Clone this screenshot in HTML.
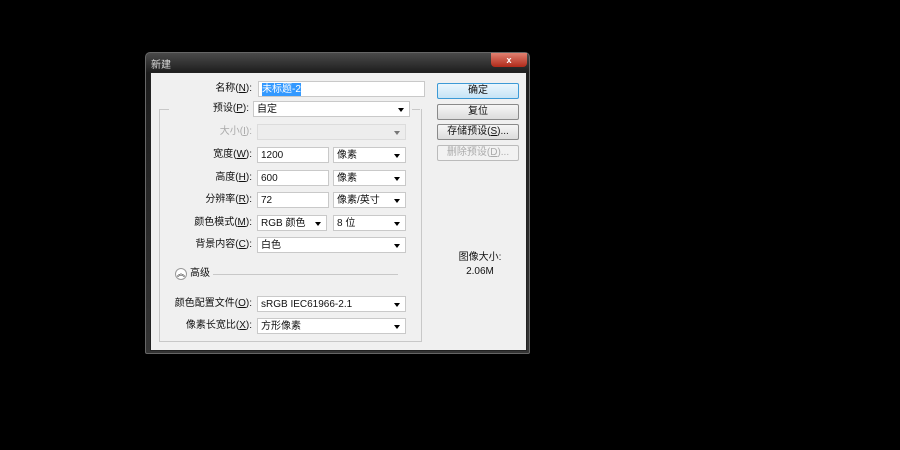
<!DOCTYPE html><html><head><meta charset="utf-8"><style>
body{margin:0;width:900px;height:450px;background:#000;position:relative;overflow:hidden;font-family:"Liberation Sans","Noto Sans CJK SC",sans-serif;font-size:10px;color:#111}
.a{position:absolute}
.win{left:145px;top:52px;width:385px;height:302px;background:linear-gradient(#4a4a4a,#1c1c1c 20px,#333);border-radius:5px 5px 2px 2px;border:1px solid #666;box-sizing:border-box}
.client{left:150px;top:72px;width:375px;height:277px;background:#f0f0f0;border:1px solid #222}
.inp{background:#fff;border:1px solid #c9c9c9;box-sizing:border-box;height:16px;line-height:13px;padding-left:3px;display:flex;align-items:center}
.dd::after{content:"";position:absolute;right:5px;top:6px;border-left:3px solid transparent;border-right:3px solid transparent;border-top:4px solid #000}
.lb{text-align:right;width:120px;line-height:16px;height:16px;left:132px}
.btn{left:437px;width:80px;height:14px;border:1px solid #8a8a8a;border-radius:2px;background:linear-gradient(#f6f6f6,#dcdcdc);text-align:center;line-height:14px;box-sizing:content-box}
u{text-decoration:underline}
</style></head><body>
<div class="a win"></div>
<div class="a" style="left:151px;top:56px;color:#ddd;font-size:10px">新建</div>
<div class="a" style="left:491px;top:53px;width:36px;height:14px;background:linear-gradient(#e08070,#b02a1a);border-radius:0 0 4px 4px;color:#fff;text-align:center;font-size:9px;line-height:14px;font-weight:bold">x</div>
<div class="a client"></div>
<div class="a" style="left:159px;top:109px;width:261px;height:232px;border:1px solid #c8c8c8;border-top:none"></div>
<div class="a" style="left:159px;top:109px;width:10px;border-top:1px solid #c8c8c8"></div>
<div class="a" style="left:412px;top:109px;width:8px;border-top:1px solid #c8c8c8"></div>
<div class="a lb" style="top:81px">名称(<u>N</u>):</div>
<div class="a inp" style="left:258px;top:81px;width:167px"><span style="background:#3399ff;color:#fff">未标题-2</span></div>
<div class="a lb" style="top:101px;left:129px">预设(<u>P</u>):</div>
<div class="a inp dd" style="left:253px;top:101px;width:157px">自定</div>
<div class="a lb" style="top:124px;color:#aaa">大小(<u>I</u>):</div>
<div class="a inp dd" style="left:257px;top:124px;width:149px;background:#ececec;opacity:.5"></div>
<div class="a lb" style="top:147px">宽度(<u>W</u>):</div>
<div class="a inp" style="left:257px;top:147px;width:72px">1200</div>
<div class="a inp dd" style="left:333px;top:147px;width:73px">像素</div>
<div class="a lb" style="top:170px">高度(<u>H</u>):</div>
<div class="a inp" style="left:257px;top:170px;width:72px">600</div>
<div class="a inp dd" style="left:333px;top:170px;width:73px">像素</div>
<div class="a lb" style="top:192px">分辨率(<u>R</u>):</div>
<div class="a inp" style="left:257px;top:192px;width:72px">72</div>
<div class="a inp dd" style="left:333px;top:192px;width:73px">像素/英寸</div>
<div class="a lb" style="top:215px">颜色模式(<u>M</u>):</div>
<div class="a inp dd" style="left:257px;top:215px;width:70px">RGB 颜色</div>
<div class="a inp dd" style="left:333px;top:215px;width:73px">8 位</div>
<div class="a lb" style="top:237px">背景内容(<u>C</u>):</div>
<div class="a inp dd" style="left:257px;top:237px;width:149px">白色</div>
<div class="a" style="left:175px;top:268px;width:10px;height:10px;border:1px solid #999;border-radius:50%;background:#fff;font-size:8px;text-align:center;line-height:10px">︽</div>
<div class="a" style="left:190px;top:266px;line-height:16px">高级</div>
<div class="a" style="left:213px;top:274px;width:185px;border-top:1px solid #c8c8c8"></div>
<div class="a lb" style="top:296px">颜色配置文件(<u>O</u>):</div>
<div class="a inp dd" style="left:257px;top:296px;width:149px">sRGB IEC61966-2.1</div>
<div class="a lb" style="top:318px">像素长宽比(<u>X</u>):</div>
<div class="a inp dd" style="left:257px;top:318px;width:149px">方形像素</div>
<div class="a btn" style="top:83px;border-color:#3c9ad6;background:linear-gradient(#eaf6fd,#c6e4f6)">确定</div>
<div class="a btn" style="top:104px">复位</div>
<div class="a btn" style="top:124px">存储预设(<u>S</u>)...</div>
<div class="a btn" style="top:145px;color:#aaa;border-color:#bbb;background:#f2f2f2">删除预设(<u>D</u>)...</div>
<div class="a" style="left:440px;top:248px;width:80px;text-align:center">图像大小:</div>
<div class="a" style="left:440px;top:266px;width:80px;text-align:center">2.06M</div>
</body></html>
